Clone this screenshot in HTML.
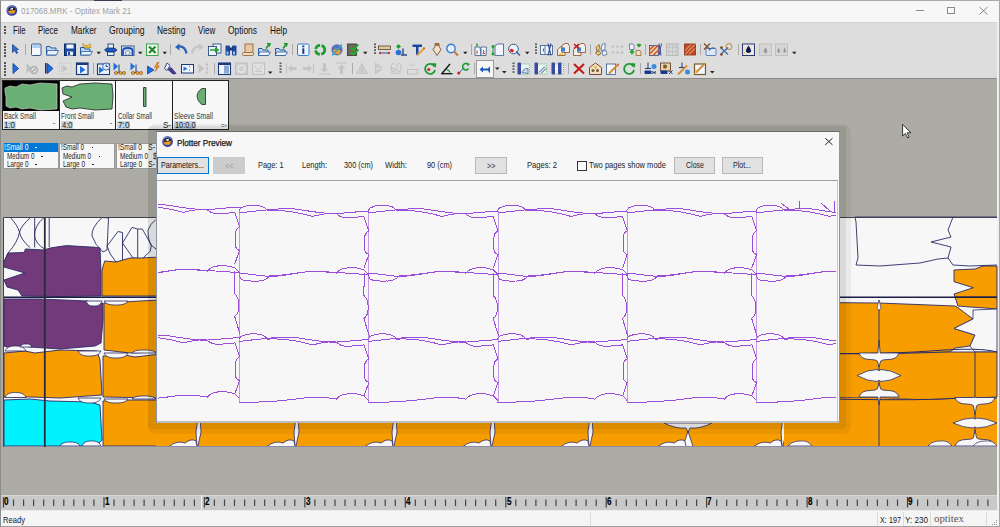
<!DOCTYPE html>
<html><head><meta charset="utf-8">
<style>
*{margin:0;padding:0;box-sizing:border-box}
html,body{width:1000px;height:527px;overflow:hidden;background:#adaca4;font-family:"Liberation Sans",sans-serif;position:relative}
.a{position:absolute}
.t{position:absolute;white-space:nowrap;transform-origin:0 0;}
svg{position:absolute;left:0;top:0;overflow:visible}
</style></head><body>

<div class="a" style="left:0px;top:0px;width:1000px;height:1px;background:#a9a9b2;"></div>
<div class="a" style="left:0px;top:1px;width:999px;height:21px;background:#f7f7f7;"></div>
<div class="a" style="left:0px;top:22px;width:999px;height:57px;background:#dddddd;"></div>
<div class="a" style="left:0px;top:22px;width:999px;height:1px;background:#d3d3cf;"></div>
<div class="a" style="left:0px;top:78px;width:999px;height:1px;background:#8a8a8a;"></div>
<div class="a" style="left:0px;top:0px;width:1px;height:527px;background:#8c8c8c;"></div>
<div class="a" style="left:997px;top:22px;width:2px;height:505px;background:#eeeeee;"></div>
<div class="a" style="left:999px;top:0px;width:1px;height:527px;background:#a8a8a8;"></div>
<div class="a" style="left:94px;top:0px;width:28px;height:1px;background:#3a3a4a;"></div>
<div class="t" style="left:21.30px;top:7.03px;font-size:9.30px;line-height:9.30px;color:#a0a0a0;font-family:'Liberation Sans',sans-serif;transform:scaleX(0.859);">017068.MRK - Optitex Mark 21</div>
<div class="a" style="left:916px;top:10px;width:8px;height:1px;background:#8a8a8a;"></div>
<div class="a" style="left:947px;top:7px;width:8px;height:7px;border:1px solid #8a8a8a"></div>
<svg width="1000" height="30"><path d="M979.5 7 L987.5 14.5 M987.5 7 L979.5 14.5" stroke="#8a8a8a" stroke-width="1" fill="none"/></svg>
<div class="t" style="left:12.75px;top:26.14px;font-size:10.47px;line-height:10.47px;color:#111;font-family:'Liberation Sans',sans-serif;transform:scaleX(0.742);">File</div>
<div class="t" style="left:37.80px;top:26.14px;font-size:10.47px;line-height:10.47px;color:#111;font-family:'Liberation Sans',sans-serif;transform:scaleX(0.761);">Piece</div>
<div class="t" style="left:70.50px;top:26.14px;font-size:10.47px;line-height:10.47px;color:#111;font-family:'Liberation Sans',sans-serif;transform:scaleX(0.783);">Marker</div>
<div class="t" style="left:109.00px;top:26.14px;font-size:10.47px;line-height:10.47px;color:#111;font-family:'Liberation Sans',sans-serif;transform:scaleX(0.824);">Grouping</div>
<div class="t" style="left:156.60px;top:26.14px;font-size:10.47px;line-height:10.47px;color:#111;font-family:'Liberation Sans',sans-serif;transform:scaleX(0.801);">Nesting</div>
<div class="t" style="left:197.70px;top:26.14px;font-size:10.47px;line-height:10.47px;color:#111;font-family:'Liberation Sans',sans-serif;transform:scaleX(0.769);">View</div>
<div class="t" style="left:228.00px;top:26.14px;font-size:10.47px;line-height:10.47px;color:#111;font-family:'Liberation Sans',sans-serif;transform:scaleX(0.804);">Options</div>
<div class="t" style="left:270.00px;top:26.14px;font-size:10.47px;line-height:10.47px;color:#111;font-family:'Liberation Sans',sans-serif;transform:scaleX(0.790);">Help</div>
<div class="a" style="left:4px;top:26px;width:2px;height:2px;background:#555;"></div>
<div class="a" style="left:4px;top:29px;width:2px;height:2px;background:#555;"></div>
<div class="a" style="left:4px;top:32px;width:2px;height:2px;background:#555;"></div>
<div class="a" style="left:4px;top:43px;width:2px;height:2px;background:#555;"></div>
<div class="a" style="left:4px;top:46px;width:2px;height:2px;background:#555;"></div>
<div class="a" style="left:4px;top:49px;width:2px;height:2px;background:#555;"></div>
<div class="a" style="left:4px;top:52px;width:2px;height:2px;background:#555;"></div>
<div class="a" style="left:4px;top:55px;width:2px;height:2px;background:#555;"></div>
<div class="a" style="left:4px;top:62px;width:2px;height:2px;background:#555;"></div>
<div class="a" style="left:4px;top:65px;width:2px;height:2px;background:#555;"></div>
<div class="a" style="left:4px;top:68px;width:2px;height:2px;background:#555;"></div>
<div class="a" style="left:4px;top:71px;width:2px;height:2px;background:#555;"></div>
<div class="a" style="left:4px;top:74px;width:2px;height:2px;background:#555;"></div>
<div class="a" style="left:2px;top:80px;width:227px;height:50px;background:#222;"></div>
<div class="a" style="left:3px;top:81px;width:56px;height:48px;background:#f7f7f7;"></div>
<div class="a" style="left:60px;top:81px;width:55px;height:48px;background:#f7f7f7;"></div>
<div class="a" style="left:116px;top:81px;width:56px;height:48px;background:#f7f7f7;"></div>
<div class="a" style="left:173px;top:81px;width:55px;height:48px;background:#f7f7f7;"></div>
<div class="a" style="left:3px;top:81px;width:56px;height:30px;background:#000;"></div>
<svg width="1000" height="140">
<path d="M5 88 L10 86 L16 87 L22 84 L30 85 L40 83 L57 84 L57 109 L40 110 L30 108 L22 109 L16 107 L10 108 L6 106 L6 97 L5 92 Z" fill="#6aaf73" stroke="#c8c8c8" stroke-width="0.7"/>
<path d="M62 88 L67 86 L72 87 L80 84 L95 83 L112 84 L113 96 L112 109 L95 110 L80 108 L72 109 L66 107 L63 101 L72 97 L63 94 Z" fill="#6aaf73" stroke="#222" stroke-width="0.8"/>
<path d="M143.5 87.5 L146 87.5 L146 106.5 L143.5 106.5 Z" fill="#6aaf73" stroke="#222" stroke-width="0.8"/>
<path d="M205.5 88.5 L205.5 104.5 L202 104.5 C196 100 195 93 202 88.5 Z" fill="#6aaf73" stroke="#222" stroke-width="0.8"/>
</svg>
<div class="t" style="left:4.00px;top:112.71px;font-size:8.14px;line-height:8.14px;color:#333;font-family:'Liberation Sans',sans-serif;transform:scaleX(0.786);">Back Small</div>
<div class="a" style="left:3.5px;top:120.5px;width:12.5px;height:8px;background:#c5d5e3;"></div>
<div class="t" style="left:4.00px;top:121.12px;font-size:8.72px;line-height:8.72px;color:#222;font-family:'Liberation Sans',sans-serif;transform:scaleX(0.907);">1:0</div>
<div class="t" style="left:61.00px;top:112.71px;font-size:8.14px;line-height:8.14px;color:#333;font-family:'Liberation Sans',sans-serif;transform:scaleX(0.793);">Front Small</div>
<div class="a" style="left:61px;top:120.5px;width:12px;height:8px;background:#c5d5e3;"></div>
<div class="t" style="left:61.50px;top:121.12px;font-size:8.72px;line-height:8.72px;color:#222;font-family:'Liberation Sans',sans-serif;transform:scaleX(0.866);">4:0</div>
<div class="t" style="left:118.00px;top:112.71px;font-size:8.14px;line-height:8.14px;color:#333;font-family:'Liberation Sans',sans-serif;transform:scaleX(0.775);">Collar Small</div>
<div class="a" style="left:117px;top:120.5px;width:13px;height:8px;background:#c5d5e3;"></div>
<div class="t" style="left:117.50px;top:121.12px;font-size:8.72px;line-height:8.72px;color:#222;font-family:'Liberation Sans',sans-serif;transform:scaleX(0.949);">7:0</div>
<div class="t" style="left:174.00px;top:112.71px;font-size:8.14px;line-height:8.14px;color:#333;font-family:'Liberation Sans',sans-serif;transform:scaleX(0.821);">Sleeve Small</div>
<div class="a" style="left:174px;top:120.5px;width:22px;height:8px;background:#c5d5e3;"></div>
<div class="t" style="left:174.50px;top:121.12px;font-size:8.72px;line-height:8.72px;color:#222;font-family:'Liberation Sans',sans-serif;transform:scaleX(0.846);">10:0,0</div>
<div class="t" style="left:53.00px;top:119.12px;font-size:8.72px;line-height:8.72px;color:#333;font-family:'Liberation Sans',sans-serif;transform:scaleX(0.685);">-</div>
<div class="t" style="left:110.00px;top:119.12px;font-size:8.72px;line-height:8.72px;color:#333;font-family:'Liberation Sans',sans-serif;transform:scaleX(0.685);">-</div>
<div class="t" style="left:163.00px;top:121.12px;font-size:8.72px;line-height:8.72px;color:#222;font-family:'Liberation Sans',sans-serif;transform:scaleX(0.917);">S-</div>
<div class="t" style="left:220.50px;top:120.00px;font-size:9.45px;line-height:9.45px;color:#444;font-family:'Liberation Sans',sans-serif;transform:scaleX(0.694);">=-</div>
<div class="a" style="left:2.5px;top:142.5px;width:56.0px;height:26px;background:#f7f7f7;border:1px solid #9a9a9a"></div>
<div class="a" style="left:59px;top:142.5px;width:56px;height:26px;background:#f7f7f7;border:1px solid #9a9a9a"></div>
<div class="a" style="left:115.5px;top:142.5px;width:56.5px;height:26px;background:#f7f7f7;border:1px solid #9a9a9a"></div>
<div class="a" style="left:3.5px;top:143px;width:54.5px;height:9px;background:#0078d7;"></div>
<div class="t" style="left:3.50px;top:143.05px;font-size:9.16px;line-height:9.16px;color:#fff;font-family:'Liberation Sans',sans-serif;transform:scaleX(0.741);">!Small 0</div>
<div class="a" style="left:35px;top:146.8px;width:1.5px;height:1px;background:#fff;"></div>
<div class="t" style="left:6.50px;top:151.85px;font-size:9.16px;line-height:9.16px;color:#222;font-family:'Liberation Sans',sans-serif;transform:scaleX(0.684);">Medium 0</div>
<div class="a" style="left:41px;top:155.6px;width:1.5px;height:1px;background:#222;"></div>
<div class="t" style="left:6.50px;top:160.45px;font-size:9.16px;line-height:9.16px;color:#222;font-family:'Liberation Sans',sans-serif;transform:scaleX(0.693);">Large 0</div>
<div class="a" style="left:35px;top:164.2px;width:1.5px;height:1px;background:#222;"></div>
<div class="t" style="left:61.00px;top:143.05px;font-size:9.16px;line-height:9.16px;color:#222;font-family:'Liberation Sans',sans-serif;transform:scaleX(0.696);">!Small 0</div>
<div class="a" style="left:91.5px;top:146.8px;width:1.5px;height:1px;background:#222;"></div>
<div class="t" style="left:63.00px;top:151.85px;font-size:9.16px;line-height:9.16px;color:#222;font-family:'Liberation Sans',sans-serif;transform:scaleX(0.697);">Medium 0</div>
<div class="a" style="left:98.5px;top:155.6px;width:1.5px;height:1px;background:#222;"></div>
<div class="t" style="left:63.00px;top:160.45px;font-size:9.16px;line-height:9.16px;color:#222;font-family:'Liberation Sans',sans-serif;transform:scaleX(0.709);">Large 0</div>
<div class="a" style="left:92px;top:164.2px;width:1.5px;height:1px;background:#222;"></div>
<div class="t" style="left:118.00px;top:143.05px;font-size:9.16px;line-height:9.16px;color:#222;font-family:'Liberation Sans',sans-serif;transform:scaleX(0.726);">!Small 0</div>
<div class="t" style="left:148.00px;top:143.05px;font-size:9.16px;line-height:9.16px;color:#222;font-family:'Liberation Sans',sans-serif;transform:scaleX(0.764);">S-</div>
<div class="t" style="left:120.00px;top:151.85px;font-size:9.16px;line-height:9.16px;color:#222;font-family:'Liberation Sans',sans-serif;transform:scaleX(0.697);">Medium 0</div>
<div class="t" style="left:153.00px;top:151.85px;font-size:9.16px;line-height:9.16px;color:#222;font-family:'Liberation Sans',sans-serif;transform:scaleX(0.787);">$</div>
<div class="t" style="left:120.00px;top:160.45px;font-size:9.16px;line-height:9.16px;color:#222;font-family:'Liberation Sans',sans-serif;transform:scaleX(0.709);">Large 0</div>
<div class="t" style="left:148.00px;top:160.45px;font-size:9.16px;line-height:9.16px;color:#222;font-family:'Liberation Sans',sans-serif;transform:scaleX(0.764);">S-</div>
<div class="a" style="left:1px;top:495px;width:996px;height:16px;background:#c9c9c9;"></div>
<div class="a" style="left:1px;top:495px;width:996px;height:1px;background:#d6d6d6;"></div>
<svg width="1000" height="527"><path d="M3.5 497V507.5 M13.5 499.5V506 M23.6 499.5V506 M33.6 499.5V506 M43.7 499.5V506 M53.7 499.5V506 M63.8 499.5V506 M73.8 499.5V506 M83.9 499.5V506 M93.9 499.5V506 M104.0 497V507.5 M114.0 499.5V506 M124.0 499.5V506 M134.1 499.5V506 M144.1 499.5V506 M154.2 499.5V506 M164.2 499.5V506 M174.3 499.5V506 M184.3 499.5V506 M194.4 499.5V506 M204.4 497V507.5 M214.4 499.5V506 M224.5 499.5V506 M234.5 499.5V506 M244.6 499.5V506 M254.6 499.5V506 M264.7 499.5V506 M274.7 499.5V506 M284.8 499.5V506 M294.8 499.5V506 M304.9 497V507.5 M314.9 499.5V506 M324.9 499.5V506 M335.0 499.5V506 M345.0 499.5V506 M355.1 499.5V506 M365.1 499.5V506 M375.2 499.5V506 M385.2 499.5V506 M395.3 499.5V506 M405.3 497V507.5 M415.3 499.5V506 M425.4 499.5V506 M435.4 499.5V506 M445.5 499.5V506 M455.5 499.5V506 M465.6 499.5V506 M475.6 499.5V506 M485.7 499.5V506 M495.7 499.5V506 M505.8 497V507.5 M515.8 499.5V506 M525.8 499.5V506 M535.9 499.5V506 M545.9 499.5V506 M556.0 499.5V506 M566.0 499.5V506 M576.1 499.5V506 M586.1 499.5V506 M596.2 499.5V506 M606.2 497V507.5 M616.2 499.5V506 M626.3 499.5V506 M636.3 499.5V506 M646.4 499.5V506 M656.4 499.5V506 M666.5 499.5V506 M676.5 499.5V506 M686.6 499.5V506 M696.6 499.5V506 M706.6 497V507.5 M716.7 499.5V506 M726.7 499.5V506 M736.8 499.5V506 M746.8 499.5V506 M756.9 499.5V506 M766.9 499.5V506 M777.0 499.5V506 M787.0 499.5V506 M797.1 499.5V506 M807.1 497V507.5 M817.1 499.5V506 M827.2 499.5V506 M837.2 499.5V506 M847.3 499.5V506 M857.3 499.5V506 M867.4 499.5V506 M877.4 499.5V506 M887.5 499.5V506 M897.5 499.5V506 M907.5 497V507.5 M917.6 499.5V506 M927.6 499.5V506 M937.7 499.5V506 M947.7 499.5V506 M957.8 499.5V506 M967.8 499.5V506 M977.9 499.5V506 M987.9 499.5V506" stroke="#444" stroke-width="1.2" fill="none"/></svg>
<div class="t" style="left:4.30px;top:496.99px;font-size:10.17px;line-height:10.17px;color:#000;font-family:'Liberation Sans',sans-serif;font-weight:bold;transform:scaleX(0.797);-webkit-text-stroke:0.2px #000;">0</div>
<div class="t" style="left:104.75px;top:496.99px;font-size:10.17px;line-height:10.17px;color:#000;font-family:'Liberation Sans',sans-serif;font-weight:bold;transform:scaleX(0.797);-webkit-text-stroke:0.2px #000;">1</div>
<div class="t" style="left:205.20px;top:496.99px;font-size:10.17px;line-height:10.17px;color:#000;font-family:'Liberation Sans',sans-serif;font-weight:bold;transform:scaleX(0.797);-webkit-text-stroke:0.2px #000;">2</div>
<div class="t" style="left:305.65px;top:496.99px;font-size:10.17px;line-height:10.17px;color:#000;font-family:'Liberation Sans',sans-serif;font-weight:bold;transform:scaleX(0.797);-webkit-text-stroke:0.2px #000;">3</div>
<div class="t" style="left:406.10px;top:496.99px;font-size:10.17px;line-height:10.17px;color:#000;font-family:'Liberation Sans',sans-serif;font-weight:bold;transform:scaleX(0.797);-webkit-text-stroke:0.2px #000;">4</div>
<div class="t" style="left:506.55px;top:496.99px;font-size:10.17px;line-height:10.17px;color:#000;font-family:'Liberation Sans',sans-serif;font-weight:bold;transform:scaleX(0.797);-webkit-text-stroke:0.2px #000;">5</div>
<div class="t" style="left:607.00px;top:496.99px;font-size:10.17px;line-height:10.17px;color:#000;font-family:'Liberation Sans',sans-serif;font-weight:bold;transform:scaleX(0.797);-webkit-text-stroke:0.2px #000;">6</div>
<div class="t" style="left:707.45px;top:496.99px;font-size:10.17px;line-height:10.17px;color:#000;font-family:'Liberation Sans',sans-serif;font-weight:bold;transform:scaleX(0.797);-webkit-text-stroke:0.2px #000;">7</div>
<div class="t" style="left:807.90px;top:496.99px;font-size:10.17px;line-height:10.17px;color:#000;font-family:'Liberation Sans',sans-serif;font-weight:bold;transform:scaleX(0.797);-webkit-text-stroke:0.2px #000;">8</div>
<div class="t" style="left:908.35px;top:496.99px;font-size:10.17px;line-height:10.17px;color:#000;font-family:'Liberation Sans',sans-serif;font-weight:bold;transform:scaleX(0.797);-webkit-text-stroke:0.2px #000;">9</div>
<div class="a" style="left:201px;top:495px;width:1.2px;height:15px;background:#f4f4f4;"></div>
<div class="a" style="left:1px;top:510px;width:998px;height:1px;background:#ececec;"></div>
<div class="a" style="left:1px;top:511px;width:998px;height:15px;background:#f5f5f5;"></div>
<div class="a" style="left:1px;top:526px;width:998px;height:1px;background:#a0a0a0;"></div>
<div class="t" style="left:2.50px;top:516.05px;font-size:9.16px;line-height:9.16px;color:#222;font-family:'Liberation Sans',sans-serif;transform:scaleX(0.831);">Ready</div>
<div class="a" style="left:590px;top:512px;width:1px;height:14px;background:#dcdcdc;"></div>
<div class="a" style="left:877px;top:512px;width:1px;height:14px;background:#dcdcdc;"></div>
<div class="a" style="left:903px;top:512px;width:1px;height:14px;background:#dcdcdc;"></div>
<div class="a" style="left:930px;top:512px;width:1px;height:14px;background:#dcdcdc;"></div>
<div class="a" style="left:985.5px;top:512px;width:1px;height:14px;background:#dcdcdc;"></div>
<div class="t" style="left:880.00px;top:516.05px;font-size:9.16px;line-height:9.16px;color:#222;font-family:'Liberation Sans',sans-serif;transform:scaleX(0.794);">X: 197</div>
<div class="t" style="left:905.00px;top:516.05px;font-size:9.16px;line-height:9.16px;color:#222;font-family:'Liberation Sans',sans-serif;transform:scaleX(0.886);">Y: 230</div>
<div class="t" style="left:934.00px;top:514.25px;font-size:10.57px;line-height:10.57px;color:#555;font-family:'Liberation Serif',serif;transform:scaleX(1.022);">optitex</div>
<div class="a" style="left:996px;top:520px;width:1px;height:1px;background:#999;"></div>
<div class="a" style="left:994px;top:522px;width:1px;height:1px;background:#999;"></div>
<div class="a" style="left:996px;top:522px;width:1px;height:1px;background:#999;"></div>
<div class="a" style="left:992px;top:524px;width:1px;height:1px;background:#999;"></div>
<div class="a" style="left:994px;top:524px;width:1px;height:1px;background:#999;"></div>
<div class="a" style="left:996px;top:524px;width:1px;height:1px;background:#999;"></div>
<svg width="1000" height="527"><path d="M902.6 124.3 L902.6 136 L905.3 133.5 L907.6 138 L909.2 137.2 L907 132.8 L910.8 132.8 Z" fill="#fff" stroke="#222" stroke-width="0.9"/></svg>
<svg width="1000" height="527"><rect x="3" y="217" width="994.3" height="229" fill="#f7f7f7"/><path d="M10 217 Q18 226 19.5 232 Q18 242 8 253 L4 262" fill="none" stroke="#2a2a66" stroke-width="0.9" stroke-linejoin="round"/><path d="M31 217 Q21 226 19.5 232 Q21 240 30 247.5" fill="none" stroke="#2a2a66" stroke-width="0.9" stroke-linejoin="round"/><path d="M34.7 217 V247.5" fill="none" stroke="#2a2a66" stroke-width="0.9" stroke-linejoin="round"/><path d="M44.5 217 Q34 226 34.5 236 Q36 244 44.5 249" fill="none" stroke="#2a2a66" stroke-width="0.9" stroke-linejoin="round"/><path d="M49.2 217 V247" fill="none" stroke="#2a2a66" stroke-width="0.9" stroke-linejoin="round"/><path d="M102 217.5 L108.5 218 L107 250 L103 252 Q95 245 92 236 Q91 228 102 217.5 Z" fill="none" stroke="#2a2a66" stroke-width="0.9" stroke-linejoin="round"/><path d="M107 246 L118 231.5 L122.5 232.5 L122.5 261 L116 262 Q109 254 107 246 Z" fill="none" stroke="#2a2a66" stroke-width="0.9" stroke-linejoin="round"/><path d="M122.5 243 L132 227.4 L137.5 229 L142.3 229 L151.4 245 L150.2 251.3 L142.3 258.7 L133 258 Z" fill="none" stroke="#2a2a66" stroke-width="0.9" stroke-linejoin="round"/><path d="M137.7 229 V258.7" fill="none" stroke="#2a2a66" stroke-width="0.9" stroke-linejoin="round"/><path d="M156 219.4 Q150 224 148 230.2 Q148 240 151 245 L156 249" fill="none" stroke="#2a2a66" stroke-width="0.9" stroke-linejoin="round"/><path d="M4 262 L8 253 L24 252.5 L25.5 249 L44 250 L50 248 L66.5 245.6 L95.5 247.3 L100 248 L101 272 L101 296 L60 296.5 L22 296 L18 290 L7 287 L4 280 L25 273 L4 267 Z" fill="#733a7b" stroke="#2a2a66" stroke-width="0.9" stroke-linejoin="round"/><path d="M4 299 L40 299 L88 301 L95 305 L103 303 L103 320 L101 343 L95 346 L60 349 L30 347 L22 346 L10 348 L4 346 Z" fill="#733a7b" stroke="#2a2a66" stroke-width="0.9" stroke-linejoin="round"/><path d="M4 353 L25 351 L35 353 L60 350 L97 351 L100 360 L102 395 L60 398 L30 397 L4 397 Z" fill="#f79d00" stroke="#2a2a66" stroke-width="0.9" stroke-linejoin="round"/><path d="M4 400 L30 399 L50 401 L90 402 L100 405 L102 440 L96 446 L60 446 L20 446 L4 446 Z" fill="#00f2ff" stroke="#2a2a66" stroke-width="0.9" stroke-linejoin="round"/><path d="M104.7 261 L116 262 L123 260 L130 258 L141 258 L160 257 L160 296 L102 296 L102 270 Z" fill="#f79d00" stroke="#2a2a66" stroke-width="0.9" stroke-linejoin="round"/><path d="M104 303 L125 302 L140 301 L160 300 L160 352 L130 353 L104 350 Z" fill="#f79d00" stroke="#2a2a66" stroke-width="0.9" stroke-linejoin="round"/><path d="M103 356 L125 355 L135 357 L160 354 L160 398 L103 397 Z" fill="#f79d00" stroke="#2a2a66" stroke-width="0.9" stroke-linejoin="round"/><path d="M103 401 L125 400 L160 400 L160 446 L103 446 Z" fill="#f79d00" stroke="#2a2a66" stroke-width="0.9" stroke-linejoin="round"/><path d="M5 397.5 C7 392.5 12.5 392.5 15.5 392.5 C18.5 392.5 24 392.5 26 397.5 Z" fill="#f7f7f7" stroke="#2a2a66" stroke-width="0.8" stroke-linejoin="round"/><path d="M78 398 C80 403 86.5 403 89.5 403 C92.5 403 99 403 101 398 Z" fill="#f7f7f7" stroke="#2a2a66" stroke-width="0.8" stroke-linejoin="round"/><path d="M5 351 C7 346 12.5 346 15.5 346 C18.5 346 24 346 26 351 Z" fill="#f7f7f7" stroke="#2a2a66" stroke-width="0.8" stroke-linejoin="round"/><path d="M78 351 C80 356 86.5 356 89.5 356 C92.5 356 99 356 101 351 Z" fill="#f7f7f7" stroke="#2a2a66" stroke-width="0.8" stroke-linejoin="round"/><path d="M60 446 C62 442 67.0 442 70.0 442 C73.0 442 78 442 80 446 Z" fill="#f7f7f7" stroke="#2a2a66" stroke-width="0.8" stroke-linejoin="round"/><path d="M82 446 C84 441 88.5 441 91.5 441 C94.5 441 99 441 101 446 Z" fill="#f7f7f7" stroke="#2a2a66" stroke-width="0.8" stroke-linejoin="round"/><path d="M104 353 C106 358 113.0 358 116.0 358 C119.0 358 126 358 128 353 Z" fill="#f7f7f7" stroke="#2a2a66" stroke-width="0.8" stroke-linejoin="round"/><path d="M132 353 C134 350 141.0 350 144.0 350 C147.0 350 154 350 156 353 Z" fill="#f7f7f7" stroke="#2a2a66" stroke-width="0.8" stroke-linejoin="round"/><path d="M104 399 C106 403 113.0 403 116.0 403 C119.0 403 126 403 128 399 Z" fill="#f7f7f7" stroke="#2a2a66" stroke-width="0.8" stroke-linejoin="round"/><path d="M132 399 C134 396 141.0 396 144.0 396 C147.0 396 154 396 156 399 Z" fill="#f7f7f7" stroke="#2a2a66" stroke-width="0.8" stroke-linejoin="round"/><path d="M104 301 C106 305 113.0 305 116.0 305 C119.0 305 126 305 128 301 Z" fill="#f7f7f7" stroke="#2a2a66" stroke-width="0.8" stroke-linejoin="round"/><path d="M20 347 C22 344 23.0 344 26.0 344 C29.0 344 30 344 32 347 Z" fill="#f7f7f7" stroke="#2a2a66" stroke-width="0.8" stroke-linejoin="round"/><path d="M86 301 C88 306 91.0 306 94.0 306 C97.0 306 100 306 102 301 Z" fill="#f7f7f7" stroke="#2a2a66" stroke-width="0.8" stroke-linejoin="round"/><path d="M156 418 L840 418 L840 446 L156 446 Z" fill="#f79d00" stroke="#2a2a66" stroke-width="0" stroke-linejoin="round"/><path d="M198 418 L200 418 L201 432 L198 446 L197 446 L196 432 Z" fill="#f7f7f7" stroke="#2a2a66" stroke-width="0.8" stroke-linejoin="round"/><path d="M169 446.5 Q177 440 185 443 Q191 438 196 441 L197 446.5 Z" fill="#f7f7f7" stroke="#2a2a66" stroke-width="0.8" stroke-linejoin="round"/><path d="M296 418 L298 418 L299 432 L296 446 L295 446 L294 432 Z" fill="#f7f7f7" stroke="#2a2a66" stroke-width="0.8" stroke-linejoin="round"/><path d="M267 446.5 Q275 440 283 443 Q289 438 294 441 L295 446.5 Z" fill="#f7f7f7" stroke="#2a2a66" stroke-width="0.8" stroke-linejoin="round"/><path d="M394 418 L396 418 L397 432 L394 446 L393 446 L392 432 Z" fill="#f7f7f7" stroke="#2a2a66" stroke-width="0.8" stroke-linejoin="round"/><path d="M365 446.5 Q373 440 381 443 Q387 438 392 441 L393 446.5 Z" fill="#f7f7f7" stroke="#2a2a66" stroke-width="0.8" stroke-linejoin="round"/><path d="M492 418 L494 418 L495 432 L492 446 L491 446 L490 432 Z" fill="#f7f7f7" stroke="#2a2a66" stroke-width="0.8" stroke-linejoin="round"/><path d="M463 446.5 Q471 440 479 443 Q485 438 490 441 L491 446.5 Z" fill="#f7f7f7" stroke="#2a2a66" stroke-width="0.8" stroke-linejoin="round"/><path d="M590 418 L592 418 L593 432 L590 446 L589 446 L588 432 Z" fill="#f7f7f7" stroke="#2a2a66" stroke-width="0.8" stroke-linejoin="round"/><path d="M561 446.5 Q569 440 577 443 Q583 438 588 441 L589 446.5 Z" fill="#f7f7f7" stroke="#2a2a66" stroke-width="0.8" stroke-linejoin="round"/><path d="M664 423 Q676 429 686 428 L688 432 L690 428 Q700 429 712 423 Z" fill="#f7f7f7" stroke="#2a2a66" stroke-width="0.8" stroke-linejoin="round"/><path d="M683 446.5 L688 431 L693 446.5 Z" fill="#f7f7f7" stroke="#2a2a66" stroke-width="0.8" stroke-linejoin="round"/><path d="M658 446.5 Q666 440 674 443 Q680 438 685 441 L686 446.5 Z" fill="#f7f7f7" stroke="#2a2a66" stroke-width="0.8" stroke-linejoin="round"/><path d="M783 418 L785 418 L786 432 L783 446 L782 446 L781 432 Z" fill="#f7f7f7" stroke="#2a2a66" stroke-width="0.8" stroke-linejoin="round"/><path d="M754 446.5 Q762 440 770 443 Q776 438 781 441 L782 446.5 Z" fill="#f7f7f7" stroke="#2a2a66" stroke-width="0.8" stroke-linejoin="round"/><path d="M760 302 L879 303 L955 306 L957 307 L973 319 L954 328.5 L975 335 L970 346 L955 348 L950 352 L879 354 L760 353 Z" fill="#f79d00" stroke="#2a2a66" stroke-width="0.9" stroke-linejoin="round"/><path d="M955 297 L997 297 L997 309 L985 308 L970 307 L958 306 Z" fill="#f79d00" stroke="#2a2a66" stroke-width="0.9" stroke-linejoin="round"/><path d="M973 310 L997 309 L997 352 L975 352 L970 346 L975 335 L954 328.5 L973 319 Z" fill="#f7f7f7" stroke="#2a2a66" stroke-width="0.8" stroke-linejoin="round"/><path d="M760 353 L879 354 L950 352 L975 352 L997 352 L997 397 L930 400 L879 398 L760 397 Z" fill="#f79d00" stroke="#2a2a66" stroke-width="0.9" stroke-linejoin="round"/><path d="M784 398 L879 398 L930 400 L975 398 L997 398 L997 446 L784 446 Z" fill="#f79d00" stroke="#2a2a66" stroke-width="0" stroke-linejoin="round"/><path d="M879 300 V447" fill="none" stroke="#2a2a66" stroke-width="0.9" stroke-linejoin="round"/><path d="M975 352 V447" fill="none" stroke="#2a2a66" stroke-width="0.9" stroke-linejoin="round"/><path d="M760 352.8 Q880 355 930 351 T997 352" fill="none" stroke="#2a2a66" stroke-width="1.0" stroke-linejoin="round"/><path d="M760 397.5 Q900 401 940 399 T997 398" fill="none" stroke="#2a2a66" stroke-width="1.0" stroke-linejoin="round"/><path d="M859 353 Q861 359.5 870 359.5 Q876 359.5 877.4 361.125 L879 367 L880.6 361.125 Q882 359.5 888 359.5 Q897 359.5 899 353 L880.2 353 L879 340 L877.8 353 Z" fill="#f7f7f7" stroke="#2a2a66" stroke-width="0.8" stroke-linejoin="round"/><path d="M857 375.5 Q868.0 369.5 877 369.5 L879 370.7 L881 369.5 Q890.0 369.5 901 375.5 Q890.0 381.5 881 381.5 L879 380.3 L877 381.5 Q868.0 381.5 857 375.5 Z" fill="#f7f7f7" stroke="#2a2a66" stroke-width="0.8" stroke-linejoin="round"/><path d="M859 397 Q861 390.5 870 390.5 Q876 390.5 877.4 388.875 L879 383 L880.6 388.875 Q882 390.5 888 390.5 Q897 390.5 899 397 L880.2 397 L879 405 L877.8 397 Z" fill="#f7f7f7" stroke="#2a2a66" stroke-width="0.8" stroke-linejoin="round"/><path d="M955 397.5 Q957 404.0 966 404.0 Q972 404.0 973.4 405.625 L975 414.5 L976.6 405.625 Q978 404.0 984 404.0 Q993 404.0 995 397.5 L976.2 397.5 L975 397.0 L973.8 397.5 Z" fill="#f7f7f7" stroke="#2a2a66" stroke-width="0.8" stroke-linejoin="round"/><path d="M953 423 Q964.0 418 973 418 L975 419.0 L977 418 Q986.0 418 997 423 Q986.0 428 977 428 L975 427.0 L973 428 Q964.0 428 953 423 Z" fill="#f7f7f7" stroke="#2a2a66" stroke-width="0.8" stroke-linejoin="round"/><path d="M955 446 Q957 439.5 966 439.5 Q972 439.5 973.4 437.875 L975 430 L976.6 437.875 Q978 439.5 984 439.5 Q993 439.5 995 446 L976.2 446 L975 446.5 L973.8 446 Z" fill="#f7f7f7" stroke="#2a2a66" stroke-width="0.8" stroke-linejoin="round"/><path d="M788 446 Q792 441 800 441 Q808 440 812 446 Z" fill="#f7f7f7" stroke="#2a2a66" stroke-width="0.7" stroke-linejoin="round"/><path d="M928 446 Q932 441 940 441 Q948 440 952 446 Z" fill="#f7f7f7" stroke="#2a2a66" stroke-width="0.7" stroke-linejoin="round"/><path d="M973 446 Q977 441 985 441 Q993 440 997 446 Z" fill="#f7f7f7" stroke="#2a2a66" stroke-width="0.7" stroke-linejoin="round"/><path d="M879 300 L877 308 Q879 312 881 308 Z" fill="#f7f7f7" stroke="#2a2a66" stroke-width="0.6" stroke-linejoin="round"/><path d="M855 217 L953 217 L948 230 L951 237 L931 242 L951 247 L948 258 L938 259 L920 263 L880 266 L856 265 L858 258 L856 222 Z" fill="none" stroke="#2a2a66" stroke-width="0.9" stroke-linejoin="round"/><path d="M953 217 L997 217 M997 265 L970 266 L953 265 L948 258" fill="none" stroke="#2a2a66" stroke-width="0.9" stroke-linejoin="round"/><path d="M954 270 L975 269 L983 266 L997 266 L997 297 L955 297 L954 294 L973.4 287.7 L954 281.7 Z" fill="#f79d00" stroke="#2a2a66" stroke-width="0.9" stroke-linejoin="round"/><path d="M3 446.5 H997" stroke="#8a8aa8" stroke-width="1"/><path d="M3 297.3 H997" fill="none" stroke="#1d1d45" stroke-width="1.6" stroke-linejoin="round"/><path d="M44.8 217 V447" fill="none" stroke="#2a2a3a" stroke-width="1.8" stroke-linejoin="round"/><path d="M3.5 447 V217.5 H997" fill="none" stroke="#404050" stroke-width="1"/></svg>
<div class="a" style="left:148px;top:124px;width:703px;height:310px;border-radius:8px;background:rgba(0,0,0,0.05)"></div>
<div class="a" style="left:148px;top:126px;width:698px;height:303px;border-radius:4px;background:rgba(0,0,0,0.065)"></div>
<div class="a" style="left:156px;top:131px;width:684px;height:292px;background:#f7f7f7;border:1px solid #8c95a0;border-top-color:#6a6a6a"></div>
<div class="a" style="left:157px;top:180px;width:681px;height:241px;background:#f7f7f7;border-top:1px solid #a0a0a0;border-right:1px solid #c8c8c8"></div>
<div class="a" style="left:157px;top:421px;width:682px;height:2px;background:#bdbdbd;"></div>
<div class="t" style="left:177.00px;top:138.00px;font-size:9.45px;line-height:9.45px;color:#111;font-family:'Liberation Sans',sans-serif;transform:scaleX(0.865);-webkit-text-stroke:0.25px #111;">Plotter Preview</div>
<svg width="1000" height="527"><path d="M825.2 138.2 L832.5 144.9 M832.5 138.2 L825.2 144.9" stroke="#222" stroke-width="1" fill="none"/></svg>
<div class="a" style="left:157px;top:157px;width:51.5px;height:17px;background:#e1e1e1;border:1.5px solid #0078d7"></div>
<div class="t" style="left:161.00px;top:161.13px;font-size:9.30px;line-height:9.30px;color:#111;font-family:'Liberation Sans',sans-serif;transform:scaleX(0.770);">Parameters...</div>
<div class="a" style="left:213px;top:157px;width:32px;height:17px;background:#cccccc;"></div>
<div class="t" style="left:225.00px;top:161.87px;font-size:9.01px;line-height:9.01px;color:#a0a0a0;font-family:'Liberation Sans',sans-serif;transform:scaleX(0.797);">&lt;&lt;</div>
<div class="a" style="left:475px;top:157px;width:32px;height:17px;background:#e1e1e1;border:1px solid #b8b8b8"></div>
<div class="t" style="left:486.80px;top:161.87px;font-size:9.01px;line-height:9.01px;color:#333;font-family:'Liberation Sans',sans-serif;transform:scaleX(0.797);">&gt;&gt;</div>
<div class="a" style="left:674px;top:157px;width:41px;height:17px;background:#e1e1e1;border:1px solid #b8b8b8"></div>
<div class="t" style="left:686.00px;top:161.43px;font-size:9.30px;line-height:9.30px;color:#222;font-family:'Liberation Sans',sans-serif;transform:scaleX(0.757);">Close</div>
<div class="a" style="left:722px;top:157px;width:41px;height:17px;background:#e1e1e1;border:1px solid #b8b8b8"></div>
<div class="t" style="left:733.00px;top:161.43px;font-size:9.30px;line-height:9.30px;color:#222;font-family:'Liberation Sans',sans-serif;transform:scaleX(0.757);">Plot...</div>
<div class="a" style="left:577px;top:161px;width:10px;height:10px;background:#fff;border:1px solid #333"></div>
<div class="t" style="left:257.50px;top:161.43px;font-size:9.30px;line-height:9.30px;color:#222;font-family:'Liberation Sans',sans-serif;transform:scaleX(0.796);">Page: 1</div>
<div class="t" style="left:302.00px;top:161.43px;font-size:9.30px;line-height:9.30px;color:#222;font-family:'Liberation Sans',sans-serif;transform:scaleX(0.806);">Length:</div>
<div class="t" style="left:344.00px;top:161.43px;font-size:9.30px;line-height:9.30px;color:#222;font-family:'Liberation Sans',sans-serif;transform:scaleX(0.790);">300 (cm)</div>
<div class="t" style="left:385.00px;top:161.43px;font-size:9.30px;line-height:9.30px;color:#222;font-family:'Liberation Sans',sans-serif;transform:scaleX(0.834);">Width:</div>
<div class="t" style="left:427.00px;top:161.43px;font-size:9.30px;line-height:9.30px;color:#222;font-family:'Liberation Sans',sans-serif;transform:scaleX(0.793);">90 (cm)</div>
<div class="t" style="left:527.00px;top:161.43px;font-size:9.30px;line-height:9.30px;color:#222;font-family:'Liberation Sans',sans-serif;transform:scaleX(0.817);">Pages: 2</div>
<div class="t" style="left:589.00px;top:161.43px;font-size:9.30px;line-height:9.30px;color:#222;font-family:'Liberation Sans',sans-serif;transform:scaleX(0.809);">Two pages show mode</div>
<div class="a" style="left:158px;top:182px;width:678px;height:238px;overflow:hidden"><svg width="678" height="238" style="left:0;top:0"><g transform="translate(-158,-182)" fill="none" stroke="#9d4ed8" stroke-width="1" shape-rendering="crispEdges"><path d="M109.8 208.9 C128.0 207.0 148.0 204.0 163.0 204.7 C173.0 205.5 183.0 208.5 204.0 209.8 C218.0 209.0 228.0 207.5 239.8 207.2"/><path d="M109.5 207.0 L111.7 203.8 Q118.0 201.0 123.6 201.3 Q135.0 201.0 138.2 206.7 C153.0 205.5 168.0 208.0 183.4 212.4 C193.0 210.0 203.0 209.0 207.0 209.5 Q212.0 215.0 223.0 213.5 Q230.0 213.0 234.7 212.4"/><path d="M239.8 272.8 C223.0 271.5 208.0 270.0 180.0 269.5 C163.0 271.5 153.0 274.5 140.7 274.5 C128.0 273.5 118.0 271.5 109.8 271.1"/><path d="M239.5 272.5 L234.7 267.7 Q224.0 264.5 217.6 266.0 Q211.0 266.5 207.3 271.1 C198.0 269.5 188.0 268.5 180.0 269.4 C163.0 271.5 148.0 274.5 140.7 273.7 Q136.0 279.5 128.0 279.0 Q116.0 279.5 111.7 277.1 L109.5 272.5"/><path d="M109.8 339.4 C128.0 337.5 148.0 334.5 163.0 335.2 C173.0 336.0 183.0 339.0 204.0 340.3 C218.0 339.5 228.0 338.0 239.8 337.7"/><path d="M109.5 337.5 L111.7 334.3 Q118.0 331.5 123.6 331.8 Q135.0 331.5 138.2 337.2 C153.0 336.0 168.0 338.5 183.4 342.9 C193.0 340.5 203.0 339.5 207.0 340.0 Q212.0 345.5 223.0 344.0 Q230.0 343.5 234.7 342.9"/><path d="M239.5 398.5 L234.7 393.7 Q224.0 390.5 217.6 392.0 Q211.0 392.5 207.3 397.1 C198.0 395.5 188.0 394.5 180.0 395.4 C163.0 397.5 148.0 400.5 109.5 400.5"/><path d="M234.7 212.4 L239.5 226.9 Q235.5 229.0 235.3 234.0 L235.3 245.0 Q235.5 249.0 239.5 250.5 L234.7 264.2"/><path d="M235.0 271.5 L234.7 293.5 Q239.0 297.5 239.0 305.5 Q239.0 313.5 234.7 316.5 L240.0 334.0"/><path d="M234.7 342.4 L239.5 356.9 Q235.5 359.0 235.3 364.0 L235.3 375.0 Q235.5 379.0 239.5 380.5 L234.7 394.2"/><path d="M239.5 211 V402" stroke-opacity="0.55"/><path d="M239.1 212.9 C257.2 211.0 277.2 208.0 292.2 208.7 C302.2 209.5 312.2 212.5 333.2 213.8 C347.2 213.0 357.2 211.5 369.1 211.2"/><path d="M238.8 211.0 L240.9 207.8 Q247.2 205.0 252.8 205.3 Q264.2 205.0 267.4 210.7 C282.2 209.5 297.2 212.0 312.6 216.4 C322.2 214.0 332.2 213.0 336.2 213.5 Q341.2 219.0 352.2 217.5 Q359.2 217.0 363.9 216.4"/><path d="M369.1 274.8 C352.2 273.5 337.2 272.0 309.2 271.5 C292.2 273.5 282.2 276.5 269.9 276.5 C257.2 275.5 247.2 273.5 239.1 273.1"/><path d="M368.8 274.5 L363.9 269.7 Q353.2 266.5 346.9 268.0 Q340.2 268.5 336.6 273.1 C327.2 271.5 317.2 270.5 309.2 271.4 C292.2 273.5 277.2 276.5 269.9 275.7 Q265.2 281.5 257.2 281.0 Q245.2 281.5 240.9 279.1 L238.8 274.5"/><path d="M239.1 341.4 C257.2 339.5 277.2 336.5 292.2 337.2 C302.2 338.0 312.2 341.0 333.2 342.3 C347.2 341.5 357.2 340.0 369.1 339.7"/><path d="M238.8 339.5 L240.9 336.3 Q247.2 333.5 252.8 333.8 Q264.2 333.5 267.4 339.2 C282.2 338.0 297.2 340.5 312.6 344.9 C322.2 342.5 332.2 341.5 336.2 342.0 Q341.2 347.5 352.2 346.0 Q359.2 345.5 363.9 344.9"/><path d="M368.8 400.5 L363.9 395.7 Q353.2 392.5 346.9 394.0 Q340.2 394.5 336.6 399.1 C327.2 397.5 317.2 396.5 309.2 397.4 C292.2 399.5 277.2 402.5 238.8 402.5"/><path d="M363.9 216.4 L368.8 230.9 Q364.8 233.0 364.6 238.0 L364.6 249.0 Q364.8 253.0 368.8 254.5 L363.9 268.2"/><path d="M364.2 273.5 L363.9 295.5 Q368.2 299.5 368.2 307.5 Q368.2 315.5 363.9 318.5 L369.2 336.0"/><path d="M363.9 344.4 L368.8 358.9 Q364.8 361.0 364.6 366.0 L364.6 377.0 Q364.8 381.0 368.8 382.5 L363.9 396.2"/><path d="M368.8 211 V402" stroke-opacity="0.55"/><path d="M368.3 212.9 C386.5 211.0 406.5 208.0 421.5 208.7 C431.5 209.5 441.5 212.5 462.5 213.8 C476.5 213.0 486.5 211.5 498.3 211.2"/><path d="M368.0 211.0 L370.2 207.8 Q376.5 205.0 382.1 205.3 Q393.5 205.0 396.7 210.7 C411.5 209.5 426.5 212.0 441.9 216.4 C451.5 214.0 461.5 213.0 465.5 213.5 Q470.5 219.0 481.5 217.5 Q488.5 217.0 493.2 216.4"/><path d="M498.3 274.8 C481.5 273.5 466.5 272.0 438.5 271.5 C421.5 273.5 411.5 276.5 399.2 276.5 C386.5 275.5 376.5 273.5 368.3 273.1"/><path d="M498.0 274.5 L493.2 269.7 Q482.5 266.5 476.1 268.0 Q469.5 268.5 465.8 273.1 C456.5 271.5 446.5 270.5 438.5 271.4 C421.5 273.5 406.5 276.5 399.2 275.7 Q394.5 281.5 386.5 281.0 Q374.5 281.5 370.2 279.1 L368.0 274.5"/><path d="M368.3 341.4 C386.5 339.5 406.5 336.5 421.5 337.2 C431.5 338.0 441.5 341.0 462.5 342.3 C476.5 341.5 486.5 340.0 498.3 339.7"/><path d="M368.0 339.5 L370.2 336.3 Q376.5 333.5 382.1 333.8 Q393.5 333.5 396.7 339.2 C411.5 338.0 426.5 340.5 441.9 344.9 C451.5 342.5 461.5 341.5 465.5 342.0 Q470.5 347.5 481.5 346.0 Q488.5 345.5 493.2 344.9"/><path d="M498.0 400.5 L493.2 395.7 Q482.5 392.5 476.1 394.0 Q469.5 394.5 465.8 399.1 C456.5 397.5 446.5 396.5 438.5 397.4 C421.5 399.5 406.5 402.5 368.0 402.5"/><path d="M493.2 216.4 L498.0 230.9 Q494.0 233.0 493.8 238.0 L493.8 249.0 Q494.0 253.0 498.0 254.5 L493.2 268.2"/><path d="M493.5 273.5 L493.2 295.5 Q497.5 299.5 497.5 307.5 Q497.5 315.5 493.2 318.5 L498.5 336.0"/><path d="M493.2 344.4 L498.0 358.9 Q494.0 361.0 493.8 366.0 L493.8 377.0 Q494.0 381.0 498.0 382.5 L493.2 396.2"/><path d="M498.0 211 V402" stroke-opacity="0.55"/><path d="M497.6 212.9 C515.8 211.0 535.8 208.0 550.8 208.7 C560.8 209.5 570.8 212.5 591.8 213.8 C605.8 213.0 615.8 211.5 627.5 211.2"/><path d="M497.2 211.0 L499.4 207.8 Q505.8 205.0 511.4 205.3 Q522.8 205.0 526.0 210.7 C540.8 209.5 555.8 212.0 571.1 216.4 C580.8 214.0 590.8 213.0 594.8 213.5 Q599.8 219.0 610.8 217.5 Q617.8 217.0 622.5 216.4"/><path d="M627.5 274.8 C610.8 273.5 595.8 272.0 567.8 271.5 C550.8 273.5 540.8 276.5 528.5 276.5 C515.8 275.5 505.8 273.5 497.6 273.1"/><path d="M627.2 274.5 L622.5 269.7 Q611.8 266.5 605.4 268.0 Q598.8 268.5 595.0 273.1 C585.8 271.5 575.8 270.5 567.8 271.4 C550.8 273.5 535.8 276.5 528.5 275.7 Q523.8 281.5 515.8 281.0 Q503.8 281.5 499.4 279.1 L497.2 274.5"/><path d="M497.6 341.4 C515.8 339.5 535.8 336.5 550.8 337.2 C560.8 338.0 570.8 341.0 591.8 342.3 C605.8 341.5 615.8 340.0 627.5 339.7"/><path d="M497.2 339.5 L499.4 336.3 Q505.8 333.5 511.4 333.8 Q522.8 333.5 526.0 339.2 C540.8 338.0 555.8 340.5 571.1 344.9 C580.8 342.5 590.8 341.5 594.8 342.0 Q599.8 347.5 610.8 346.0 Q617.8 345.5 622.5 344.9"/><path d="M627.2 400.5 L622.5 395.7 Q611.8 392.5 605.4 394.0 Q598.8 394.5 595.0 399.1 C585.8 397.5 575.8 396.5 567.8 397.4 C550.8 399.5 535.8 402.5 497.2 402.5"/><path d="M622.5 216.4 L627.2 230.9 Q623.2 233.0 623.0 238.0 L623.0 249.0 Q623.2 253.0 627.2 254.5 L622.5 268.2"/><path d="M622.8 273.5 L622.5 295.5 Q626.8 299.5 626.8 307.5 Q626.8 315.5 622.5 318.5 L627.8 336.0"/><path d="M622.5 344.4 L627.2 358.9 Q623.2 361.0 623.0 366.0 L623.0 377.0 Q623.2 381.0 627.2 382.5 L622.5 396.2"/><path d="M627.2 211 V402" stroke-opacity="0.55"/><path d="M626.8 212.9 C645.0 211.0 665.0 208.0 680.0 208.7 C690.0 209.5 700.0 212.5 721.0 213.8 C735.0 213.0 745.0 211.5 756.8 211.2"/><path d="M626.5 211.0 L628.7 207.8 Q635.0 205.0 640.6 205.3 Q652.0 205.0 655.2 210.7 C670.0 209.5 685.0 212.0 700.4 216.4 C710.0 214.0 720.0 213.0 724.0 213.5 Q729.0 219.0 740.0 217.5 Q747.0 217.0 751.7 216.4"/><path d="M756.8 274.8 C740.0 273.5 725.0 272.0 697.0 271.5 C680.0 273.5 670.0 276.5 657.7 276.5 C645.0 275.5 635.0 273.5 626.8 273.1"/><path d="M756.5 274.5 L751.7 269.7 Q741.0 266.5 734.6 268.0 Q728.0 268.5 724.3 273.1 C715.0 271.5 705.0 270.5 697.0 271.4 C680.0 273.5 665.0 276.5 657.7 275.7 Q653.0 281.5 645.0 281.0 Q633.0 281.5 628.7 279.1 L626.5 274.5"/><path d="M626.8 341.4 C645.0 339.5 665.0 336.5 680.0 337.2 C690.0 338.0 700.0 341.0 721.0 342.3 C735.0 341.5 745.0 340.0 756.8 339.7"/><path d="M626.5 339.5 L628.7 336.3 Q635.0 333.5 640.6 333.8 Q652.0 333.5 655.2 339.2 C670.0 338.0 685.0 340.5 700.4 344.9 C710.0 342.5 720.0 341.5 724.0 342.0 Q729.0 347.5 740.0 346.0 Q747.0 345.5 751.7 344.9"/><path d="M756.5 400.5 L751.7 395.7 Q741.0 392.5 734.6 394.0 Q728.0 394.5 724.3 399.1 C715.0 397.5 705.0 396.5 697.0 397.4 C680.0 399.5 665.0 402.5 626.5 402.5"/><path d="M751.7 216.4 L756.5 230.9 Q752.5 233.0 752.3 238.0 L752.3 249.0 Q752.5 253.0 756.5 254.5 L751.7 268.2"/><path d="M752.0 273.5 L751.7 295.5 Q756.0 299.5 756.0 307.5 Q756.0 315.5 751.7 318.5 L757.0 336.0"/><path d="M751.7 344.4 L756.5 358.9 Q752.5 361.0 752.3 366.0 L752.3 377.0 Q752.5 381.0 756.5 382.5 L751.7 396.2"/><path d="M756.5 211 V402" stroke-opacity="0.55"/><path d="M756.0 212.9 C774.2 211.0 794.2 208.0 809.2 208.7 C819.2 209.5 829.2 212.5 850.2 213.8 C864.2 213.0 874.2 211.5 886.0 211.2"/><path d="M755.8 211.0 L758.0 207.8 Q764.2 205.0 769.9 205.3 Q781.2 205.0 784.5 210.7 C799.2 209.5 814.2 212.0 829.6 216.4 C839.2 214.0 849.2 213.0 853.2 213.5 Q858.2 219.0 869.2 217.5 Q876.2 217.0 881.0 216.4"/><path d="M886.0 274.8 C869.2 273.5 854.2 272.0 826.2 271.5 C809.2 273.5 799.2 276.5 787.0 276.5 C774.2 275.5 764.2 273.5 756.0 273.1"/><path d="M885.8 274.5 L881.0 269.7 Q870.2 266.5 863.9 268.0 Q857.2 268.5 853.5 273.1 C844.2 271.5 834.2 270.5 826.2 271.4 C809.2 273.5 794.2 276.5 787.0 275.7 Q782.2 281.5 774.2 281.0 Q762.2 281.5 758.0 279.1 L755.8 274.5"/><path d="M756.0 341.4 C774.2 339.5 794.2 336.5 809.2 337.2 C819.2 338.0 829.2 341.0 850.2 342.3 C864.2 341.5 874.2 340.0 886.0 339.7"/><path d="M755.8 339.5 L758.0 336.3 Q764.2 333.5 769.9 333.8 Q781.2 333.5 784.5 339.2 C799.2 338.0 814.2 340.5 829.6 344.9 C839.2 342.5 849.2 341.5 853.2 342.0 Q858.2 347.5 869.2 346.0 Q876.2 345.5 881.0 344.9"/><path d="M885.8 400.5 L881.0 395.7 Q870.2 392.5 863.9 394.0 Q857.2 394.5 853.5 399.1 C844.2 397.5 834.2 396.5 826.2 397.4 C809.2 399.5 794.2 402.5 755.8 402.5"/><path d="M881.0 216.4 L885.8 230.9 Q881.8 233.0 881.5 238.0 L881.5 249.0 Q881.8 253.0 885.8 254.5 L881.0 268.2"/><path d="M881.2 273.5 L881.0 295.5 Q885.2 299.5 885.2 307.5 Q885.2 315.5 881.0 318.5 L886.2 336.0"/><path d="M881.0 344.4 L885.8 358.9 Q881.8 361.0 881.5 366.0 L881.5 377.0 Q881.8 381.0 885.8 382.5 L881.0 396.2"/><path d="M885.8 211 V402" stroke-opacity="0.55"/><path d="M781 203 L790 210 M799 201 V209 M821 203 L830 211 M834 201 V213"/></g></svg></div>
<svg width="1000" height="80"><g transform="translate(12,43.5)"><path d="M0.5 1 L0.5 9 L2.5 7 L4.5 10 L5.8 9.3 L4 6.3 L6.5 6 Z" fill="#2a6fd6" stroke="#163a80" stroke-width="0.7"/></g><rect x="25" y="44.0" width="1" height="11" fill="#a9a9a9"/><g transform="translate(31,43.5)"><rect x="0.5" y="0.5" width="9.5" height="11.5" rx="1" fill="#f4f8fc" stroke="#3a5a8a"/><rect x="1.5" y="1.5" width="7.5" height="3" fill="#a8d0f0"/></g><g transform="translate(46,43.5)"><path d="M0.5 3 L4 3 L5 4.5 L10 4.5 L10 11.5 L0.5 11.5 Z" fill="#bcd8f2" stroke="#2b5a9a"/><path d="M1.5 7 L12.5 7 L10.5 11.5 L0.5 11.5 Z" fill="#e8f2fb" stroke="#2b5a9a" stroke-width="0.8"/></g><g transform="translate(64,43.5)"><rect x="0.5" y="0.5" width="11" height="11.5" fill="#1a4aa0" stroke="#0b2a66"/><rect x="2.5" y="1" width="7" height="4" fill="#f0f4ff"/><rect x="3" y="8" width="6" height="4" fill="#e8eef8"/><rect x="4" y="8.5" width="2" height="3" fill="#1a4aa0"/></g><g transform="translate(80,43.5)"><path d="M3 0 L5 2 L8 2 L10 0 L11 4 L3 4 Z" fill="#f2c040" stroke="#b08020" stroke-width="0.6"/><path d="M0.5 4 L4 4 L5 5.5 L10 5.5 L10 11.5 L0.5 11.5 Z" fill="#bcd8f2" stroke="#2b5a9a"/><path d="M1.5 8 L12.5 8 L10.5 11.5 L0.5 11.5 Z" fill="#e8f2fb" stroke="#2b5a9a" stroke-width="0.8"/></g><path d="M96.5 51.7 h4.5 l-2.25 2.5 z" fill="#222"/><g transform="translate(104,43.5)"><rect x="4" y="0.5" width="5.5" height="5" fill="#e8f0fa" stroke="#1a3a7a" stroke-width="0.9"/><path d="M0.5 6.5 Q2 4.5 4 4.5 H9.5 Q11.5 4.5 13 6.5 Q11.5 8.5 9.5 8.5 H4 Q2 8.5 0.5 6.5 Z" fill="#1a5ac0" stroke="#0b2a66" stroke-width="0.7"/><rect x="3.5" y="8.5" width="6.5" height="3.5" fill="#e0ecfa" stroke="#0b2a66" stroke-width="0.8"/></g><g transform="translate(121,43.5)"><rect x="0.5" y="2.5" width="12.5" height="9.5" fill="#dbe8f8" stroke="#2a4a80" stroke-width="0.9"/><path d="M2 11.5 V7 Q2 4.5 6.75 4.5 Q11.5 4.5 11.5 7 V11.5" fill="none" stroke="#1a50b0" stroke-width="1.8"/><circle cx="6.75" cy="9.5" r="2.3" fill="#e8eef8" stroke="#5a6a90" stroke-width="0.7"/></g><path d="M138 51.7 h4.5 l-2.25 2.5 z" fill="#222"/><g transform="translate(146,43.5)"><rect x="0.5" y="0.5" width="11.5" height="11.5" fill="#f6fbf6" stroke="#3ca04a"/><path fill="none" d="M3 3 L9.5 9.5 M9.5 3 L3 9.5" stroke="#1d8a2e" stroke-width="2.2"/></g><path d="M162.5 51.7 h4.5 l-2.25 2.5 z" fill="#222"/><rect x="170" y="44.0" width="1" height="11" fill="#a9a9a9"/><g transform="translate(175,43.5)"><path d="M3 3 Q10 2 11.5 10" fill="none" stroke="#2b62b8" stroke-width="2.2"/><path d="M0 3.5 L4.5 0 L4.5 7 Z" fill="#2b62b8"/></g><g transform="translate(191,43.5)"><path d="M9.5 3 Q2.5 2 1 10" fill="none" stroke="#c4c4c4" stroke-width="2.2"/><path d="M12.5 3.5 L8 0 L8 7 Z" fill="#c4c4c4"/></g><g transform="translate(208,43.5)"><rect x="5" y="0.5" width="8" height="9" fill="#f0f6ff" stroke="#1a3a7a" stroke-width="0.8"/><rect x="0.5" y="3" width="8" height="9" fill="#f0f6ff" stroke="#1a3a7a" stroke-width="0.8"/><path d="M2 6.5 H9 M7 4.5 L10 6.5 L7 8.5" stroke="#20a030" stroke-width="1.6" fill="none"/></g><g transform="translate(225,43.5)"><rect x="0.5" y="2" width="4.5" height="10" rx="1" fill="#1a4aa0"/><rect x="7" y="2" width="4.5" height="10" rx="1" fill="#1a4aa0"/><rect x="4" y="4" width="4" height="3" fill="#1a3a7a"/><rect x="1.5" y="8" width="2" height="3" fill="#9cc4f0"/><rect x="8" y="8" width="2" height="3" fill="#9cc4f0"/></g><g transform="translate(242,43.5)"><rect x="3" y="0.5" width="8" height="10" fill="#e8c8a0" stroke="#8a5a30" stroke-width="0.8"/><rect x="0.5" y="9" width="11" height="3" rx="1" fill="#f0dcc0" stroke="#8a5a30" stroke-width="0.8"/></g><g transform="translate(258,43.5)"><path d="M0.5 5 L4 5 L5 6.5 L10 6.5 L10 12 L0.5 12 Z" fill="#bcd8f2" stroke="#2b5a9a"/><path d="M1.5 8.5 L12.5 8.5 L10.5 12 L0.5 12 Z" fill="#f0f6fc" stroke="#2b5a9a" stroke-width="0.8"/><path d="M8 5 L11 1 M9 0 L12 0.5 L11 3" stroke="#1d9a2e" stroke-width="1.6" fill="none"/></g><g transform="translate(275,43.5)"><path d="M0.5 5 L4 5 L5 6.5 L10 6.5 L10 12 L0.5 12 Z" fill="#bcd8f2" stroke="#2b5a9a"/><path d="M1.5 8.5 L12.5 8.5 L10.5 12 L0.5 12 Z" fill="#f0f6fc" stroke="#2b5a9a" stroke-width="0.8"/><path d="M8 5 L11 1 M9 0 L12 0.5 L11 3" stroke="#1d9a2e" stroke-width="1.6" fill="none"/></g><rect x="292" y="44.0" width="1" height="11" fill="#a9a9a9"/><g transform="translate(297,43.5)"><rect x="0.5" y="0.5" width="11.5" height="11.5" rx="1.5" fill="#eef5ff" stroke="#3a7ad0"/><rect x="5.3" y="2" width="2" height="1.8" fill="#1a3a8a"/><rect x="5.3" y="4.8" width="2" height="5.5" fill="#1a3a8a"/></g><g transform="translate(314,43.5)"><circle cx="6.2" cy="6.3" r="4.6" fill="none" stroke="#1a9a30" stroke-width="2.6" stroke-dasharray="6 1.5"/></g><g transform="translate(331,43.5)"><circle cx="6" cy="6.3" r="5.6" fill="#5a70c0"/><path d="M2 7 Q6 3 10 8 L8 11 L3 10 Z" fill="#f0a020"/><path fill="none" d="M1 12 L11 1" stroke="#30a0d0" stroke-width="1.4"/></g><g transform="translate(347,43.5)"><rect x="0.5" y="0.5" width="9" height="11.5" fill="#6a6a5a" stroke="#303030" stroke-width="0.8"/><path d="M4 4 L6.5 6.5 L11.5 1 M4 9 L6.5 11 L11.5 6" stroke="#22b02a" stroke-width="1.8" fill="none"/></g><path d="M363 51.7 h4.5 l-2.25 2.5 z" fill="#222"/><rect x="374" y="43.5" width="2" height="1.6" fill="#555"/><rect x="374" y="46.4" width="2" height="1.6" fill="#555"/><rect x="374" y="49.3" width="2" height="1.6" fill="#555"/><rect x="374" y="52.2" width="2" height="1.6" fill="#555"/><g transform="translate(378,43.5)"><rect x="0.5" y="2.5" width="12" height="3.5" fill="#e0c8a0" stroke="#5a4020" stroke-width="0.8"/><path fill="none" d="M1 9.5 H12" stroke="#5070b0" stroke-width="1.3"/><path d="M0.5 9.5 L3 8 V11 Z M12.5 9.5 L10 8 V11 Z" fill="#d03030"/></g><g transform="translate(395,43.5)"><path d="M3.5 0.5 L6 3 L3.5 5.5 L1 3 Z" fill="#20a030"/><circle cx="3.5" cy="9" r="2.8" fill="#2a6fd6"/><path fill="none" d="M8 5 V11.5 M6 11.5 H12" stroke="#2a4a8a" stroke-width="1.4"/></g><g transform="translate(412,43.5)"><path d="M0.5 1 H10 V3.5 H6.5 V11.5 H4 V3.5 H0.5 Z" fill="#1a4aa0"/><path fill="none" d="M5 12 L12 5" stroke="#e0a040" stroke-width="2"/><circle cx="12" cy="4.8" r="1" fill="#e04040"/></g><g transform="translate(433,43.5)"><path d="M2 0 H6 V3 L8 6 L4 12 L0 6 L2 3 Z" fill="#f0e0d0" stroke="#6a3a20" stroke-width="0.8"/><rect x="2" y="0" width="4" height="2.5" fill="#b07030"/></g><g transform="translate(446,43.5)"><circle cx="5" cy="5" r="4.2" fill="#e0f0ff" stroke="#3a7ad0" stroke-width="1.4"/><path fill="none" d="M8 8 L12 12" stroke="#c08030" stroke-width="2.2"/></g><path d="M463 51.7 h4.5 l-2.25 2.5 z" fill="#222"/><rect x="471" y="44.0" width="1" height="11" fill="#a9a9a9"/><g transform="translate(474,43.5)"><path fill="none" d="M3 0 V3" stroke="#20a030" stroke-width="1.5"/><path d="M1 3.5 H6 L7 12 H1 Z" fill="#f0f6ff" stroke="#3a5a8a" stroke-width="0.8"/><path d="M7 3.5 H12.5 L12 12 H7 Z" fill="#f0f6ff" stroke="#3a5a8a" stroke-width="0.8"/><path d="M3 7 V10.5 M9 6.5 Q11 7 9 10 H11" stroke="#e02020" stroke-width="0.9" fill="none"/></g><g transform="translate(491,43.5)"><path d="M4 2 L7 0.5 H12.5 V12 H4 Z" fill="#f0f6ff" stroke="#3a5a8a" stroke-width="0.8"/><path fill="none" d="M2 3 V10" stroke="#20a030" stroke-width="1"/><circle cx="2" cy="3" r="1.5" fill="#20a030"/><circle cx="2" cy="10.5" r="1.5" fill="#20a030"/></g><g transform="translate(508,43.5)"><circle cx="5.5" cy="5.5" r="4.8" fill="#f0f6ff" stroke="#3a5a8a" stroke-width="1"/><path d="M2 6 Q4 4 6 7 L5 9 L2 8 Z" fill="#e02020"/><path fill="none" d="M8 8 L12 12" stroke="#3a5a8a" stroke-width="1.5"/></g><path d="M525 51.7 h4.5 l-2.25 2.5 z" fill="#222"/><rect x="535" y="43.5" width="2" height="1.6" fill="#555"/><rect x="535" y="46.4" width="2" height="1.6" fill="#555"/><rect x="535" y="49.3" width="2" height="1.6" fill="#555"/><rect x="535" y="52.2" width="2" height="1.6" fill="#555"/><g transform="translate(540,43.5)"><rect x="0.5" y="2" width="12" height="9" fill="#f0f6ff" stroke="#3a5a8a" stroke-width="0.8"/><path fill="none" d="M5 2 V11" stroke="#3a5a8a" stroke-width="0.8"/><path fill="none" d="M8 0 L11 12 M11 0 L8 12" stroke="#3a4a8a" stroke-width="1.1"/><rect x="3" y="5" width="1" height="3" fill="#3060d0"/></g><g transform="translate(557,43.5)"><path d="M0.5 6 L4 3 H7 L8 6 V12 H0.5 Z" fill="#f4f0e8" stroke="#8a4a2a" stroke-width="0.8"/><path d="M5 2 L8 0 H11 L12.5 3 V9 H5 Z" fill="#f4f0e8" stroke="#8a4a2a" stroke-width="0.8"/><rect x="4" y="4" width="4" height="4" fill="#3a80d0"/><rect x="2" y="10" width="4" height="1.5" fill="#e8c040"/></g><g transform="translate(573,43.5)"><path d="M0.5 6 L4 3 H7 L8 6 V12 H0.5 Z" fill="#f4f0e8" stroke="#8a4a2a" stroke-width="0.8"/><path d="M5 2 L8 0 H11 L12.5 3 V9 H5 Z" fill="#f4f0e8" stroke="#8a4a2a" stroke-width="0.8"/><rect x="4" y="4" width="4" height="4" fill="#3a80d0"/><path fill="none" d="M1 0.5 L6 5 M6 0.5 L1 5" stroke="#c01818" stroke-width="1.6"/></g><rect x="590" y="44.0" width="1" height="11" fill="#a9a9a9"/><g transform="translate(595,43.5)"><path d="M1 4 L4 1 L5 5 L2 8 Z" fill="#e8c870" stroke="#6a4a20" stroke-width="0.7"/><path d="M7 1 L10 0 L10 6 L6 7 Z" fill="#f0f6ff" stroke="#3a5a8a" stroke-width="0.7"/><path d="M0.5 9 L4 7 L6 10 L3 12 Z" fill="#e8c870" stroke="#6a4a20" stroke-width="0.7"/><path d="M7 8 L11 7 L12 11 L8 12 Z" fill="#f0f6ff" stroke="#3a5a8a" stroke-width="0.7"/></g><g transform="translate(611,43.5)"><g fill="#c8c8c8"><circle cx="2" cy="3" r="1.6"/><circle cx="6.5" cy="3" r="1.6"/><circle cx="11" cy="3" r="1.6"/><circle cx="2" cy="9" r="1.6"/><circle cx="6.5" cy="9" r="1.6"/><circle cx="11" cy="9" r="1.6"/></g></g><g transform="translate(629,43.5)"><path d="M0.5 0.5 H4 L5 2 V6 H0.5 Z" fill="#f0f6ff" stroke="#3a5a8a" stroke-width="0.7"/><path d="M7 7 H11 L12 8.5 V12 H7 Z" fill="#f0e0c0" stroke="#8a5a20" stroke-width="0.7"/><path d="M8 1 L10 3 L12 1 M10 3 V0 M1 9 L3 7 L5 9 M3 7 V11" stroke="#20a030" stroke-width="1.5" fill="none"/></g><rect x="645" y="44.0" width="1" height="11" fill="#a9a9a9"/><g transform="translate(649,43.5)"><rect x="0.5" y="2" width="9" height="10" fill="#e8d0a0" stroke="#3a4a8a" stroke-width="0.8"/><path fill="none" d="M1 10 L9 2 M1 6 L5 2 M4 12 L9.5 6.5" stroke="#d04a30" stroke-width="1.2"/><path fill="none" d="M10 0 L12 12 M12.5 0 L10 12" stroke="#3a4a8a" stroke-width="1"/></g><g transform="translate(666,43.5)"><rect x="0.5" y="0.5" width="11.5" height="11.5" fill="#d8d8d8" stroke="#b8b8b8"/><path fill="none" d="M3 1 V12 M6.5 1 V12 M10 1 V12 M1 3.5 H12 M1 8 H12" stroke="#bcbcbc" stroke-width="0.8"/></g><g transform="translate(684,43.5)"><rect x="0.5" y="0.5" width="11" height="11" fill="#c04a2a" stroke="#8a2a10" stroke-width="0.8"/><path fill="none" d="M1 7 L7 1 M1 11 L11 1 M5 11 L11 5" stroke="#f0c080" stroke-width="1"/></g><rect x="700" y="44.0" width="1" height="11" fill="#a9a9a9"/><g transform="translate(704,43.5)"><rect x="2" y="5" width="10" height="7" rx="1" fill="#dde8f8" stroke="#3a6ab0" stroke-width="0.8"/><path fill="none" d="M0 0 L6 6 M6 0 L0 6" stroke="#7a4a2a" stroke-width="1.2"/><path d="M5 7 Q8 3 11 5" stroke="#3a6ab0" stroke-width="1.2" fill="none"/></g><g transform="translate(720,43.5)"><circle cx="9" cy="3" r="3" fill="none" stroke="#c08040" stroke-width="1"/><path fill="none" d="M0.5 4 L8 11 M8 4 L0.5 11" stroke="#3a6ab0" stroke-width="1.2"/><circle cx="1.5" cy="4" r="1.3" fill="#7a4a2a"/><circle cx="1.5" cy="11" r="1.3" fill="#7a4a2a"/></g><rect x="738" y="44.0" width="1" height="11" fill="#a9a9a9"/><g transform="translate(742,43.5)"><rect x="0.5" y="0.5" width="12" height="11.5" fill="#f0e8d8" stroke="#2a3a7a" stroke-width="1"/><path fill="none" d="M1 11 L4 8 M1 8 L3 6" stroke="#e0c040" stroke-width="1"/><path d="M6.5 2 Q3.5 6.5 4 8 Q6.5 11 9 8 Q9.5 6.5 6.5 2 Z" fill="#0b1a5a"/></g><g transform="translate(759,43.5)"><rect x="0.5" y="0.5" width="12" height="11.5" fill="#d6d6d6" stroke="#c0c0c0"/><path d="M6.5 4 Q4 7 5 9 Q6.5 10.5 8 9 Q9 7 6.5 4 Z" fill="#9a9a9a"/></g><g transform="translate(775,43.5)"><rect x="0.5" y="0.5" width="12" height="11.5" fill="#d6d6d6" stroke="#c0c0c0"/><path d="M3.5 4 Q2 7 2.5 8.5 Q3.5 10 5 8.5 Q5.5 7 3.5 4 Z M9.5 4 Q8 7 8.5 8.5 Q9.5 10 11 8.5 Q11.5 7 9.5 4 Z" fill="#9a9a9a"/></g><path d="M792 51.7 h4.5 l-2.25 2.5 z" fill="#222"/><g transform="translate(12.5,63.0)"><path d="M0.5 0.5 L6 5.5 L0.5 10.5 Z" fill="#1e6ee0" stroke="#0b3a90" stroke-width="0.8"/></g><g transform="translate(26,62.5)"><path d="M0.5 0.5 L6 6 L0.5 11 Z" fill="#c0c0c0"/><circle cx="8" cy="7.5" r="3.5" fill="none" stroke="#b0b0b0" stroke-width="1.5"/><path fill="none" d="M6 9.5 L10 5.5" stroke="#b0b0b0" stroke-width="1.2"/></g><g transform="translate(45,62.5)"><rect x="0" y="0.5" width="1.6" height="10.5" fill="#0b2a7a"/></g><g transform="translate(47,63.0)"><path d="M0.5 0.5 L6 5.5 L0.5 10.5 Z" fill="#1e6ee0" stroke="#0b3a90" stroke-width="0.8"/></g><g transform="translate(59,62.5)"><rect x="0.5" y="0.5" width="11.5" height="11" fill="none" stroke="#c0c0c0" stroke-width="0.8" stroke-dasharray="1 1"/><path d="M4 2.5 L9 6 L4 9.5 Z" fill="#c4c4c4"/><rect x="2.5" y="2.5" width="1" height="7" fill="#c4c4c4"/></g><g transform="translate(76,62.5)"><rect x="0.5" y="0.5" width="11.5" height="11.5" fill="#eef4fc" stroke="#1a3a7a" stroke-width="1.2"/><rect x="0.5" y="0.5" width="11.5" height="2" fill="#1a3a7a"/><path d="M4 3.5 L9.5 7.3 L4 11 Z" fill="#1e6ee0"/></g><rect x="93" y="63.0" width="1" height="11" fill="#a9a9a9"/><g transform="translate(97,62.5)"><rect x="0.5" y="1.5" width="12" height="10.5" fill="#eef4fc" stroke="#1a3a7a" stroke-width="1.1"/><path d="M2 4 L7 7.5 L2 11 Z" fill="#1e6ee0"/><circle cx="9.2" cy="4" r="3.6" fill="#dde8ff" stroke="#3a6ab0"/><path d="M9.2 2 V4 H11" stroke="#1a3a7a" stroke-width="0.9" fill="none"/></g><g transform="translate(113,62.5)"><path d="M0.5 0 L5 4 L0.5 8 Z" fill="#1e6ee0"/><rect x="5.5" y="2" width="1" height="8" fill="#1a3a7a"/><path fill="none" d="M1 10 H12" stroke="#3a3a3a" stroke-width="0.8"/><circle cx="3" cy="10.5" r="1.6" fill="#e8b040" stroke="#8a4a10" stroke-width="0.6"/><circle cx="7.5" cy="10.5" r="1.6" fill="#e8b040" stroke="#8a4a10" stroke-width="0.6"/><circle cx="11" cy="10.5" r="1.6" fill="#e8b040" stroke="#8a4a10" stroke-width="0.6"/></g><g transform="translate(130,62.5)"><path d="M0.5 0 L5 4 L0.5 8 Z" fill="#1e6ee0"/><rect x="5.5" y="2" width="1" height="8" fill="#1a3a7a"/><path fill="none" d="M1 10 H12" stroke="#3a3a3a" stroke-width="0.8"/><circle cx="3" cy="10.5" r="1.6" fill="#e8b040" stroke="#8a4a10" stroke-width="0.6"/><circle cx="7.5" cy="10.5" r="1.6" fill="#e8b040" stroke="#8a4a10" stroke-width="0.6"/><circle cx="11" cy="10.5" r="1.6" fill="#e8b040" stroke="#8a4a10" stroke-width="0.6"/></g><g transform="translate(147,62.5)"><path d="M0.5 3.5 L7 7.5 L0.5 11.5 Z" fill="#1e6ee0" stroke="#0b3a90" stroke-width="0.7"/><path d="M10 0 L7.5 5 H10 L8 9 L12.5 3.5 H10 L12 0 Z" fill="#f0a020" stroke="#a05010" stroke-width="0.5"/></g><g transform="translate(164,62.5)"><path d="M3 0.5 L6 3 L3 8 L0.5 6 Z" fill="#f0f6ff" stroke="#1a3a7a" stroke-width="0.9"/><path d="M4 7 L9 11.5 L12 11 L7 5 Z" fill="#4a3a9a" stroke="#1a1a5a" stroke-width="0.7"/></g><g transform="translate(181,62.5)"><rect x="0.5" y="2" width="12" height="8.5" fill="#eef4fc" stroke="#1a3a7a" stroke-width="1"/><path d="M2.5 4 L6.5 6.2 L2.5 8.5 Z" fill="#1e6ee0"/><rect x="8" y="3.5" width="1" height="1" fill="#3a6ab0"/><rect x="8" y="7" width="1" height="1" fill="#3a6ab0"/></g><g transform="translate(198,62.5)"><path d="M0.5 1 L6 6 L0.5 11 Z" fill="#c4c4c4"/><g fill="#c0c0c0"><circle cx="9" cy="2" r="1.2"/><circle cx="9" cy="6" r="1.2"/><circle cx="9" cy="10" r="1.2"/></g></g><rect x="214" y="63.0" width="1" height="11" fill="#a9a9a9"/><g transform="translate(218,62.5)"><rect x="0.5" y="0.5" width="12" height="11.5" fill="#f0f6ff" stroke="#1a3a7a" stroke-width="1.1"/><rect x="0.5" y="0.5" width="12" height="2" fill="#1a3a7a"/><rect x="6" y="3" width="5" height="8" fill="#8aa8d0"/></g><g transform="translate(235,62.5)"><rect x="0.5" y="0.5" width="12" height="11.5" fill="#cfcfcf" stroke="#bdbdbd"/><circle cx="6.5" cy="6.3" r="3.5" fill="none" stroke="#e6e6e6" stroke-width="1.4"/></g><g transform="translate(252,62.5)"><rect x="0.5" y="0.5" width="12" height="11.5" fill="#e0e0e0" stroke="#c0c0c0"/><path fill="none" d="M3 4 L6 8 L10 3 M3 9 H10" stroke="#c6c6c6" stroke-width="1"/></g><path d="M268 71.5 h4.5 l-2.25 2.5 z" fill="#222"/><rect x="279.5" y="62.5" width="2" height="1.6" fill="#555"/><rect x="279.5" y="65.4" width="2" height="1.6" fill="#555"/><rect x="279.5" y="68.3" width="2" height="1.6" fill="#555"/><rect x="279.5" y="71.2" width="2" height="1.6" fill="#555"/><g transform="translate(286,62.5)"><path fill="none" d="M0.5 1 V11" stroke="#c0c0c0" stroke-width="1"/><path d="M2 6 L6 2 V4.5 H10.5 V7.5 H6 V10 Z" fill="#c4c4c4"/></g><g transform="translate(302,62.5)"><path fill="none" d="M11.5 1 V11" stroke="#c0c0c0" stroke-width="1"/><path d="M10 6 L6 2 V4.5 H1 V7.5 H6 V10 Z" fill="#c4c4c4"/></g><g transform="translate(318,62.5)"><path fill="none" d="M1 11.5 H12" stroke="#c0c0c0" stroke-width="1"/><path d="M6.5 10 L2.5 6 H5 V0.5 H8 V6 H10.5 Z" fill="#c4c4c4"/></g><g transform="translate(335,62.5)"><path fill="none" d="M1 0.5 H12" stroke="#c0c0c0" stroke-width="1"/><path d="M6.5 2 L2.5 6 H5 V11.5 H8 V6 H10.5 Z" fill="#c4c4c4"/></g><rect x="352" y="63.0" width="1" height="11" fill="#a9a9a9"/><g transform="translate(356,62.5)"><path d="M6 1 L11.5 11 H0.5 Z" fill="#d0d0d0" stroke="#c0c0c0" stroke-width="0.7"/><path fill="none" d="M6 1 V11" stroke="#bcbcbc"/></g><g transform="translate(375,62.5)"><path d="M0.5 0.5 L8 6 L0.5 11.5 Z" fill="#cccccc" stroke="#bdbdbd" stroke-width="0.7"/><path fill="none" d="M0.5 6 H8" stroke="#e0e0e0"/></g><g transform="translate(390,62.5)"><path d="M1 6 Q1 1 4 1 M1 6 Q1 9 4 9 Q6 9 5 6 L1 6" fill="none" stroke="#c0c0c0" stroke-width="1"/><rect x="7" y="1" width="4" height="8" rx="2" fill="none" stroke="#c0c0c0"/><rect x="0.5" y="10" width="10" height="1.5" fill="#c8c8c8"/></g><g transform="translate(407,62.5)"><path d="M2 1 L5 4 L8 1" fill="none" stroke="#c0c0c0" stroke-width="1"/><rect x="0.5" y="7" width="10" height="4.5" fill="none" stroke="#c0c0c0"/></g><g transform="translate(424,62.5)"><path d="M10.5 4 A5 5 0 1 0 11 7.5" fill="none" stroke="#1a9a30" stroke-width="1.8"/><path d="M8 0.5 L12.5 1 L11.5 5.5 Z" fill="#1a9a30"/><circle cx="4.8" cy="7" r="1.5" fill="#d02020"/></g><g transform="translate(441,62.5)"><path fill="none" d="M0.5 11.5 L9 1.5" stroke="#111" stroke-width="1.3"/><path fill="none" d="M0.5 11.2 H11.5" stroke="#111" stroke-width="1.3"/><path d="M5 7 Q8 7 9 10" fill="none" stroke="#1a9a30" stroke-width="1.2"/></g><g transform="translate(457,62.5)"><path fill="none" d="M1.5 11 L7 5" stroke="#3a6ab0" stroke-width="1"/><circle cx="1.8" cy="10.5" r="1.6" fill="#d02020"/><path d="M11.5 2.5 A3.2 3.2 0 1 0 11.5 6" fill="none" stroke="#1a9a30" stroke-width="1.5"/><path d="M10 0 L13 1.8 L10.5 3.5 Z" fill="#1a9a30"/></g><rect x="474" y="63.0" width="1" height="11" fill="#a9a9a9"/><rect x="476.5" y="60.5" width="17" height="17" fill="#f6f6f6" stroke="#9a9a9a" stroke-width="1"/><g transform="translate(479,65.5)"><path d="M0.5 4 L4 1 V3 H9 Q10 1.5 11 1 V7.5 Q10 7 9 5 H4 V7 Z" fill="#1a5ab8"/></g><path d="M495 67.5 h4.5 l-2.25 2.5 z" fill="#222"/><path d="M502 71.0 h4.5 l-2.25 2.5 z" fill="#222"/><rect x="512.5" y="62.5" width="2" height="1.6" fill="#555"/><rect x="512.5" y="65.4" width="2" height="1.6" fill="#555"/><rect x="512.5" y="68.3" width="2" height="1.6" fill="#555"/><rect x="512.5" y="71.2" width="2" height="1.6" fill="#555"/><g transform="translate(517,62.5)"><rect x="3.5" y="1.5" width="9" height="10" fill="#e8f4ec" stroke="#2a9a40" stroke-width="0.6" stroke-dasharray="1 1"/><rect x="0.5" y="0" width="3.5" height="12" rx="1" fill="#3a4aa0"/><path d="M5 10 Q7 5 11 6 V11 Z" fill="#cfe0f5" stroke="#1a3a7a" stroke-width="0.6"/></g><g transform="translate(534,62.5)"><rect x="3.5" y="1.5" width="9" height="10" fill="#e8f4ec" stroke="#2a9a40" stroke-width="0.6" stroke-dasharray="1 1"/><rect x="0.5" y="0" width="3.5" height="12" rx="1" fill="#3a4aa0"/><path fill="none" d="M5 10 L11 4 M7 11 L12 6" stroke="#3a4aa0" stroke-width="1"/></g><g transform="translate(551,62.5)"><rect x="3.5" y="1.5" width="9" height="10" fill="#e8f4ec" stroke="#2a9a40" stroke-width="0.6" stroke-dasharray="1 1"/><rect x="0.5" y="0" width="3.5" height="12" rx="1" fill="#3a4aa0"/><rect x="7" y="0" width="3.5" height="12" rx="1" fill="#3a4aa0"/><path fill="none" d="M4 6 H7" stroke="#fff"/></g><rect x="568" y="63.0" width="1" height="11" fill="#a9a9a9"/><g transform="translate(573,62.5)"><path fill="none" d="M1 1.5 L11 11 M11 1.5 L1 11" stroke="#c01818" stroke-width="2"/></g><g transform="translate(589,62.5)"><path d="M0.5 5 L6.5 0.5 L12.5 5 V12 H0.5 Z" fill="#f0e0c8" stroke="#7a4a2a" stroke-width="1"/><circle cx="4" cy="8" r="1.5" fill="#7a5a3a"/><circle cx="8.5" cy="8" r="1.5" fill="#7a5a3a"/><circle cx="6.5" cy="5" r="1.4" fill="#e8c040"/></g><g transform="translate(606,62.5)"><rect x="0.5" y="1.5" width="9" height="10.5" fill="#f0f6ff" stroke="#3a5a8a" stroke-width="0.8"/><path fill="none" d="M3 11 L12 2" stroke="#d08a30" stroke-width="2"/><circle cx="12" cy="2" r="1" fill="#e05050"/></g><g transform="translate(623,62.5)"><path d="M10.5 4 A5 5 0 1 0 11 7.5" fill="none" stroke="#1a9a30" stroke-width="1.8"/><path d="M8 0.5 L12.5 1 L11.5 5.5 Z" fill="#1a9a30"/></g><rect x="640" y="63.0" width="1" height="11" fill="#a9a9a9"/><g transform="translate(644,62.5)"><path fill="none" d="M4 0 V6 M1 6 H7" stroke="#1a3a7a" stroke-width="1"/><circle cx="10" cy="4" r="2.5" fill="#3a8ae0"/><rect x="0.5" y="8" width="7" height="3.5" rx="1" fill="#1a3a8a"/><path fill="none" d="M8 9 L12 11 M8 11 L12 9" stroke="#1a3a7a"/></g><g transform="translate(660,62.5)"><rect x="0.5" y="0.5" width="10" height="8" fill="#e8d0a0" stroke="#5a3a2a" stroke-width="0.8"/><circle cx="5" cy="4" r="2" fill="#7a5a3a"/><rect x="0.5" y="8" width="7" height="3.5" rx="1" fill="#1a3a8a"/><path fill="none" d="M9 8 L12.5 11.5 M9 11.5 L12.5 8" stroke="#1a3a7a"/></g><g transform="translate(677,62.5)"><path fill="none" d="M5 0 V5 M2 5 H8" stroke="#1a3a7a" stroke-width="1"/><path fill="none" d="M1 12 L10 3" stroke="#d08a30" stroke-width="1.8"/><circle cx="10.5" cy="9.5" r="2.5" fill="#3a8ae0"/></g><g transform="translate(694,62.5)"><rect x="0.5" y="1.5" width="11" height="10.5" fill="#f0f6ff" stroke="#7a5a2a" stroke-width="1.2"/><path fill="none" d="M2 10 L11 1" stroke="#d08a30" stroke-width="1.8"/><path fill="none" d="M0.5 11 L3 8 L1 7" stroke="#e8c040" stroke-width="1"/></g><path d="M710 71.0 h4.5 l-2.25 2.5 z" fill="#222"/></svg>
<svg width="300" height="160"><defs><radialGradient id="gi" cx="0.4" cy="0.35" r="0.7"><stop offset="0" stop-color="#8aa0f0"/><stop offset="1" stop-color="#1a2a8a"/></radialGradient></defs><circle cx="11.8" cy="10.4" r="5.4" fill="url(#gi)"/><path d="M8.0 11.0 L8.8 7.800000000000001 Q11.8 6.0 14.8 7.800000000000001 L15.600000000000001 11.0 Z" fill="#1a1a22"/><path d="M9.8 9.4 Q10.8 7.4 13.3 7.800000000000001 L12.8 9.8 Z" fill="#f0f0f0"/><path d="M8.200000000000001 10.8 L15.4 10.0 L14.200000000000001 13.600000000000001 L9.4 13.600000000000001 Z" fill="#f39a10"/><circle cx="167.5" cy="141.5" r="5.4" fill="url(#gi)"/><path d="M163.7 142.1 L164.5 138.9 Q167.5 137.1 170.5 138.9 L171.3 142.1 Z" fill="#1a1a22"/><path d="M165.5 140.5 Q166.5 138.5 169.0 138.9 L168.5 140.9 Z" fill="#f0f0f0"/><path d="M163.9 141.9 L171.1 141.1 L169.9 144.7 L165.1 144.7 Z" fill="#f39a10"/></svg>
</body></html>
